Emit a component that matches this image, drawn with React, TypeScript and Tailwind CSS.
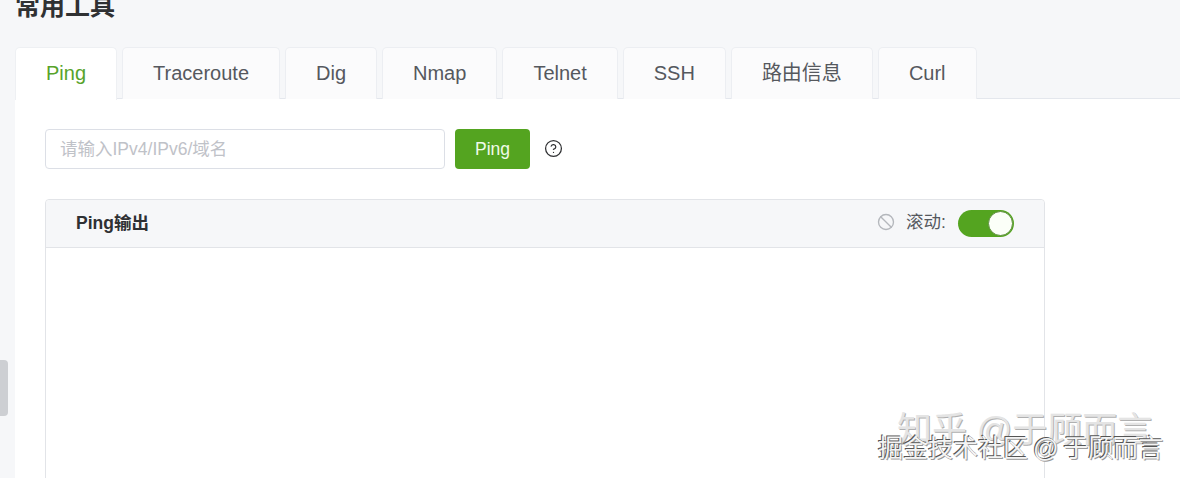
import { Ban, CircleHelp } from "lucide-react";

const TABS = ["Ping", "Traceroute", "Dig", "Nmap", "Telnet", "SSH", "路由信息", "Curl"];

export default function App() {
  return (
    <div className="relative h-[478px] w-[1180px] overflow-hidden bg-[#f6f7f9] pl-[15px] font-['Liberation_Sans','Noto_Sans_CJK_SC',sans-serif] text-[#303133]">
      <h1 className="-mt-[10px] h-[57px] text-[25px] font-bold leading-[32px]">常用工具</h1>

      <div className="flex h-[52px] gap-[5px] border-b border-[#e4e7ed]">
        {TABS.map((tab, index) => (
          <button
            key={tab}
            type="button"
            className={
              index === 0
                ? "relative z-10 h-[53px] rounded-t-[5px] border border-b-0 border-[#eef0f3] bg-white px-[30px] pb-[2px] text-[20px] text-[#57a32a]"
                : "h-[52px] rounded-t-[5px] border border-b-0 border-[#eceef2] bg-[#fbfbfc] px-[30px] pb-[2px] text-[20px] text-[#55585e]"
            }
          >
            {tab}
          </button>
        ))}
      </div>

      <div className="h-[399px] bg-white px-[30px] pt-[30px]">
        <div className="flex items-center">
          <input
            readOnly
            placeholder="请输入IPv4/IPv6/域名"
            className="h-[40px] w-[400px] rounded-[4px] border border-[#dcdfe6] bg-white px-[14px] text-[17.5px] outline-none placeholder:text-[#bfc2c8]"
          />
          <button
            type="button"
            className="ml-[10px] h-[40px] w-[75px] rounded-[4px] bg-[#54a420] text-[17.5px] text-[#f0fbe8]"
          >
            Ping
          </button>
          <CircleHelp className="ml-[14px] size-[19px] -translate-y-px text-[#303133]" strokeWidth={1.6} />
        </div>

        <div className="mt-[30px] h-[300px] w-[1000px] rounded-t-[4px] border border-[#e2e4e8] bg-white">
          <div className="flex h-[48px] items-center rounded-t-[4px] border-b border-[#e2e4e8] bg-[#f6f7f9] pl-[30px] pr-[30px]">
            <span className="text-[17.5px] font-bold text-[#2e3033]">Ping输出</span>
            <div className="ml-auto flex items-center">
              <Ban className="size-[18px] -translate-y-[2px] text-[#b4b7bc]" strokeWidth={1.8} />
              <span className="ml-[11px] w-[40px] text-[17.5px] -translate-y-px whitespace-nowrap text-[#55585e]">滚动:</span>
              <div className="ml-[12px] flex h-[27px] w-[56px] items-center justify-end rounded-full bg-[#54a420] pr-[1px]">
                <div className="size-[25px] rounded-full border border-[#5f8f3f] bg-[#fbfff8]" />
              </div>
            </div>
          </div>
        </div>
      </div>

      <div className="absolute left-0 top-[360px] h-[56px] w-[8px] rounded-r-[4px] bg-[#cdcfd3]" />

      <div className="absolute left-[897px] top-[408px] whitespace-nowrap text-[35px] leading-[44px] text-[#e4e4e4] [text-shadow:1px_1px_0_#b0b0b0]">
        知乎 @于顾而言
      </div>
      <div className="absolute left-[878px] top-[432px] whitespace-nowrap text-[25px] leading-[32px] text-[#f4f4f4] [word-spacing:-2px] [text-shadow:-1px_-1px_0_#555,1px_1px_0_#999]">
        掘金技术社区 @ 于顾而言
      </div>
    </div>
  );
}
